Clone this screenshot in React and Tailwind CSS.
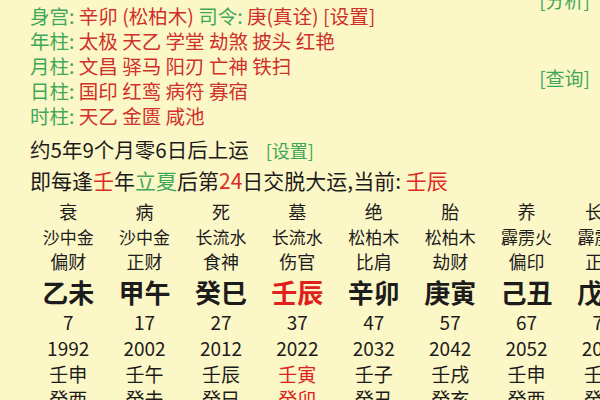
import React from "react";

const G = "text-[#3fa75a]";
const R = "text-[#d0302a]";

const topRows = [
  { label: "身宫", parts: [{ t: "辛卯 (松柏木) ", c: R }, { t: "司令: ", c: G }, { t: "庚(真诠) [设置]", c: R }] },
  { label: "年柱", parts: [{ t: "太极 天乙 学堂 劫煞 披头 红艳", c: R }] },
  { label: "月柱", parts: [{ t: "文昌 驿马 阳刃 亡神 铁扫", c: R }] },
  { label: "日柱", parts: [{ t: "国印 红鸾 病符 寡宿", c: R }] },
  { label: "时柱", parts: [{ t: "天乙 金匮 咸池", c: R }] },
];

const cols = [
  { s: "衰", n: "沙中金", g: "偏财", gz: "乙未", age: "7", year: "1992", a: "壬申", b: "癸酉" },
  { s: "病", n: "沙中金", g: "正财", gz: "甲午", age: "17", year: "2002", a: "壬午", b: "癸未" },
  { s: "死", n: "长流水", g: "食神", gz: "癸巳", age: "27", year: "2012", a: "壬辰", b: "癸巳" },
  { s: "墓", n: "长流水", g: "伤官", gz: "壬辰", age: "37", year: "2022", a: "壬寅", b: "癸卯", cur: true },
  { s: "绝", n: "松柏木", g: "比肩", gz: "辛卯", age: "47", year: "2032", a: "壬子", b: "癸丑" },
  { s: "胎", n: "松柏木", g: "劫财", gz: "庚寅", age: "57", year: "2042", a: "壬戌", b: "癸亥" },
  { s: "养", n: "霹雳火", g: "偏印", gz: "己丑", age: "67", year: "2052", a: "壬申", b: "癸酉" },
  { s: "长生", n: "霹雳火", g: "正印", gz: "戊子", age: "77", year: "2062", a: "壬午", b: "癸未" },
];

export default function App() {
  return (
    <div
      className="w-[600px] h-[400px] overflow-hidden bg-[#fcf7c7] text-[#1c1c1c]"
      style={{ fontFamily: '"Noto Sans CJK SC", "Noto Sans", sans-serif' }}
    >
      <div className="flex pl-[30px] pr-[10px]">
        <div className="flex-1 pt-[3px]">
          {topRows.map((r) => (
            <div key={r.label} className="h-[25px] leading-[25px] text-[19.5px] whitespace-pre">
              <span className={G}>{r.label}: </span>
              {r.parts.map((p, i) => (
                <span key={i} className={p.c}>{p.t}</span>
              ))}
            </div>
          ))}
        </div>
        <div className="flex flex-col items-end text-[19px] text-[#3fa75a]">
          <div className="h-0 flex items-center">[分析]</div>
          <div className="mt-[78px] h-0 flex items-center">[查询]</div>
        </div>
      </div>

      <div className="pl-[30px] mt-[6px]">
        <div className="h-[31px] leading-[31px] text-[20.5px] whitespace-pre">
          约5年9个月零6日后上运<span className="ml-[17px] text-[18px] text-[#3fa75a]">[设置]</span>
        </div>
        <div className="h-[31px] leading-[31px] text-[21px] whitespace-pre">
          即每逢<span className="text-[#e02a24]">壬</span>年<span className="text-[#3fa75a]">立夏</span>后第<span className="text-[#e02a24]">24</span>日交脱大运,当前: <span className="text-[#e02a24]">壬辰</span>
        </div>
      </div>

      <div className="flex pl-[30px] mt-[2px]">
        {cols.map((c) => (
          <div key={c.age} className="w-[76.4px] shrink-0 flex flex-col items-center whitespace-nowrap">
            <div className="h-[26px] flex items-center text-[18px]">{c.s}</div>
            <div className="h-[25px] flex items-center text-[17px]">{c.n}</div>
            <div className="h-[25px] flex items-center text-[18px]">{c.g}</div>
            <div className={`h-[35px] flex items-center text-[26px] font-bold ${c.cur ? "text-[#e0201c]" : ""}`}>{c.gz}</div>
            <div className="h-[26px] flex items-center text-[19px]">{c.age}</div>
            <div className="h-[27px] flex items-center text-[19px]">{c.year}</div>
            <div className={`h-[25px] flex items-center text-[19px] ${c.cur ? "text-[#e0201c]" : ""}`}>{c.a}</div>
            <div className={`h-[25px] flex items-center text-[19px] ${c.cur ? "text-[#e0201c]" : ""}`}>{c.b}</div>
          </div>
        ))}
      </div>
    </div>
  );
}
